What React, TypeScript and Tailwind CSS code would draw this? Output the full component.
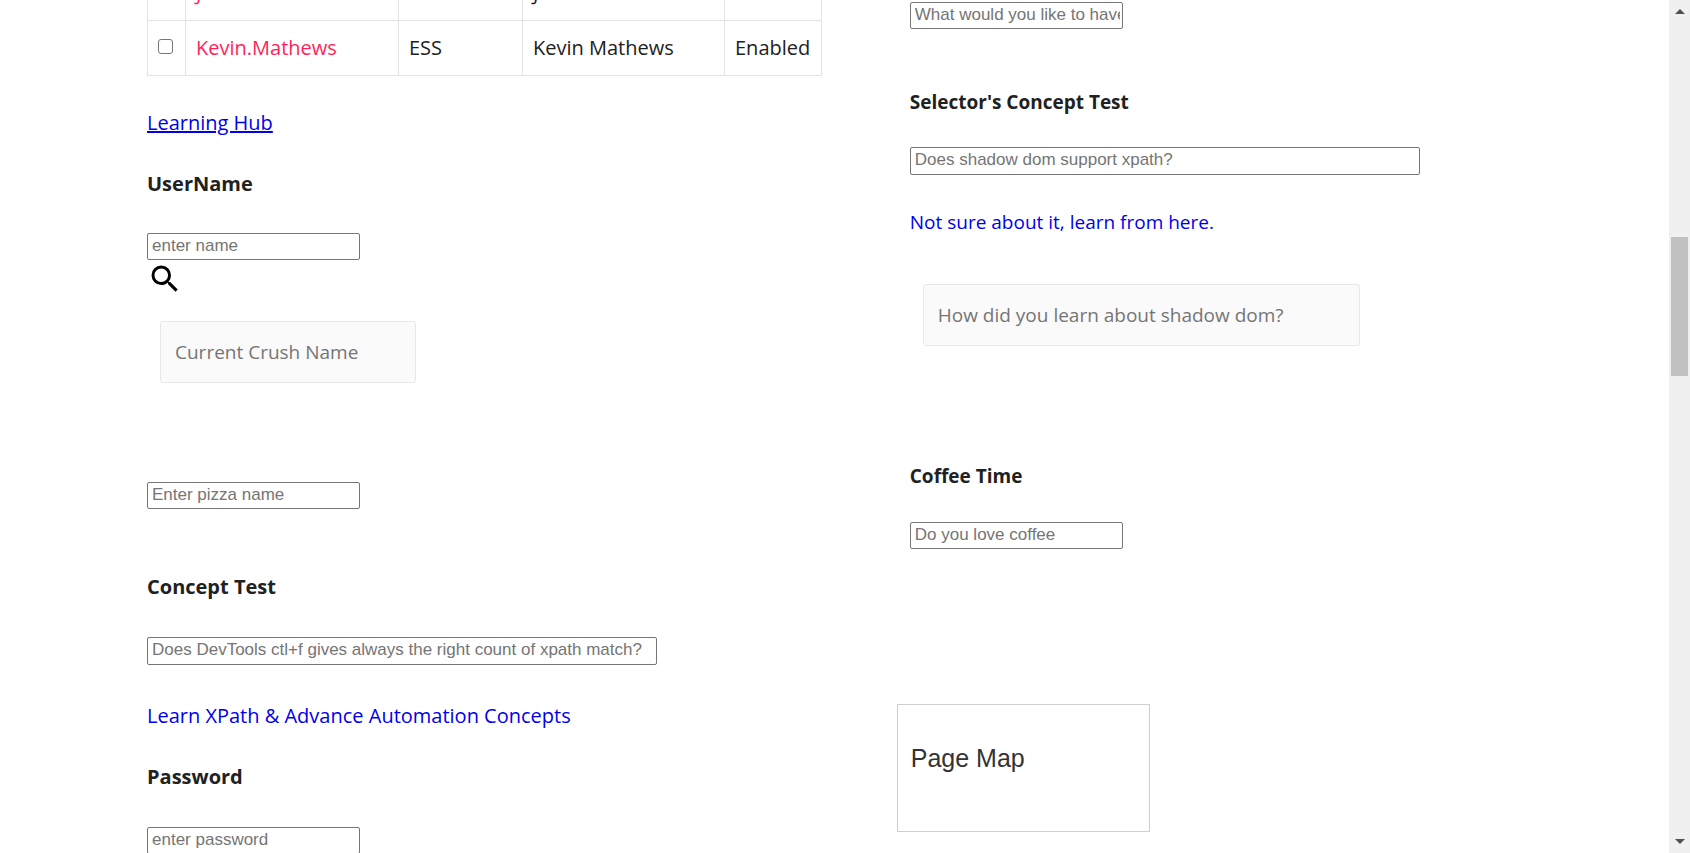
import type { ComponentProps, ReactNode } from "react";

const users = [
  { login: "Jordan.Mathews", role: "ESS", name: "Jordan Mathews", status: "Enabled" },
  { login: "Kevin.Mathews", role: "ESS", name: "Kevin Mathews", status: "Enabled" },
];

function Cell({ children }: { children: ReactNode }) {
  return <td className="border border-[#e3e3e3] px-[10px] pt-3 pb-3">{children}</td>;
}

function UserTable() {
  return (
    <table className="h-[111px] w-[675px] table-fixed border-collapse">
      <colgroup>
        <col className="w-[38px]" />
        <col className="w-[213px]" />
        <col className="w-[124px]" />
        <col className="w-[202px]" />
        <col className="w-[97px]" />
      </colgroup>
      <tbody>
        {users.map((user) => (
          <tr key={user.login} className="h-[55px]">
            <Cell>
              <input
                type="checkbox"
                aria-label={`Select ${user.login}`}
                className="mb-1 block size-[15px] appearance-none rounded-[3px] border border-[#767676] bg-white checked:bg-[#0075ff]"
              />
            </Cell>
            <Cell>
              <a href="#" className="text-[#ff1f5a]">
                {user.login}
              </a>
            </Cell>
            <Cell>{user.role}</Cell>
            <Cell>{user.name}</Cell>
            <Cell>{user.status}</Cell>
          </tr>
        ))}
      </tbody>
    </table>
  );
}

function Field(props: ComponentProps<"input">) {
  return (
    <input
      {...props}
      className="block h-[27px] w-[213px] rounded-[2px] border border-[#767676] bg-white pr-[2px] pb-[2px] pl-1 font-['Liberation_Sans',Arial,sans-serif] text-[17px] leading-5 placeholder:text-[#757575]"
    />
  );
}

function WideField(props: ComponentProps<"input">) {
  return (
    <input
      {...props}
      className="block h-7 w-[510px] rounded-[2px] border border-[#767676] bg-white pr-[2px] pb-[2px] pl-1 font-['Liberation_Sans',Arial,sans-serif] text-[17px] leading-5 placeholder:text-[#757575]"
    />
  );
}

function Label({ htmlFor, children }: { htmlFor: string; children: ReactNode }) {
  return (
    <label htmlFor={htmlFor} className="block font-bold">
      {children}
    </label>
  );
}

function SearchIcon() {
  return (
    <svg viewBox="0 0 24 24" className="size-9" aria-hidden="true">
      <path d="M15.5 14h-.79l-.28-.27A6.47 6.47 0 0 0 16 9.5 6.5 6.5 0 1 0 9.5 16c1.61 0 3.09-.59 4.23-1.57l.27.28v.79l5 4.99L20.49 19l-4.99-5zm-6 0C7.01 14 5 11.99 5 9.5S7.01 5 9.5 5 14 7.01 14 9.5 11.99 14 9.5 14z" />
    </svg>
  );
}

function Scrollbar() {
  return (
    <div className="flex w-[21px] shrink-0 flex-col items-center bg-[#f0f0f0] py-[9px]" aria-hidden="true">
      <svg viewBox="0 0 10 5" className="h-[5px] w-[10px]">
        <path d="M0 5 5 0l5 5z" fill="#505050" />
      </svg>
      <div className="flex w-full grow flex-col px-[2px]">
        <div className="grow-[223]" />
        <div className="grow-[139] bg-[#c1c1c1]" />
        <div className="grow-[463]" />
      </div>
      <svg viewBox="0 0 10 5" className="h-[5px] w-[10px]">
        <path d="M0 0h10L5 5z" fill="#505050" />
      </svg>
    </div>
  );
}

export default function App() {
  return (
    <div className="flex h-screen overflow-hidden bg-white font-['Open_Sans','Noto_Sans',sans-serif] text-[#212121]">
      <main className="grid grow grid-cols-[5fr_4fr] items-start overflow-hidden pr-[149px] pl-[147px]">
        <section className="-mt-[35px] text-[20px] leading-[30px]">
          <UserTable />
          <a href="#" className="mt-8 block w-fit text-[#0000ee] underline decoration-2">
            Learning Hub
          </a>
          <div className="mt-[31px]">
            <Label htmlFor="username">UserName</Label>
          </div>
          <div className="mt-[34px]">
            <Field id="username" type="text" placeholder="enter name" />
          </div>
          <button type="button" aria-label="Search" className="mt-px block">
            <SearchIcon />
          </button>
          <input
            type="text"
            aria-label="Current Crush Name"
            placeholder="Current Crush Name"
            className="mt-6 ml-[13px] block h-[62px] w-[256px] rounded-[3px] border border-[#e8e8e8] bg-[#fafafa] px-[14px] text-[19px] placeholder:text-[#757575]"
          />
          <div className="mt-[99px]">
            <Field type="text" aria-label="Pizza name" placeholder="Enter pizza name" />
          </div>
          <div className="mt-[63px]">
            <Label htmlFor="concept">Concept Test</Label>
          </div>
          <div className="mt-[35px]">
            <WideField
              id="concept"
              type="text"
              placeholder="Does DevTools ctl+f gives always the right count of xpath match?"
            />
          </div>
          <a href="#" className="mt-9 block w-fit text-[#0000ee]">
            Learn XPath &amp; Advance Automation Concepts
          </a>
          <div className="mt-[31px]">
            <Label htmlFor="password">Password</Label>
          </div>
          <div className="mt-[35px]">
            <Field id="password" type="password" placeholder="enter password" />
          </div>
        </section>

        <section className="pt-[2px] text-[19px] leading-[30px]">
          <Field type="text" aria-label="Drink" placeholder="What would you like to have in tea" />
          <div className="mt-[58px]">
            <Label htmlFor="selector">Selector&apos;s Concept Test</Label>
          </div>
          <div className="mt-[30px]">
            <WideField id="selector" type="text" placeholder="Does shadow dom support xpath?" />
          </div>
          <a href="#" className="mt-8 block w-fit text-[#0000ee]">
            Not sure about it, learn from here.
          </a>
          <input
            type="text"
            aria-label="How did you learn about shadow dom?"
            placeholder="How did you learn about shadow dom?"
            className="mt-[47px] ml-[13px] block h-[62px] w-[437px] rounded-[3px] border border-[#e8e8e8] bg-[#fafafa] px-[14px] text-[19px] placeholder:text-[#757575]"
          />
          <div className="mt-[115px]">
            <Label htmlFor="coffee">Coffee Time</Label>
          </div>
          <div className="mt-[31px]">
            <Field id="coffee" type="text" placeholder="Do you love coffee" />
          </div>
          <div className="mt-[155px] -ml-[13px] h-[128px] w-[253px] border border-[#cfcfcf] px-[13px] pt-[38px] font-['Liberation_Sans',Arial,sans-serif] text-[25px] text-[#333333]">
            Page Map
          </div>
        </section>
      </main>
      <Scrollbar />
    </div>
  );
}
